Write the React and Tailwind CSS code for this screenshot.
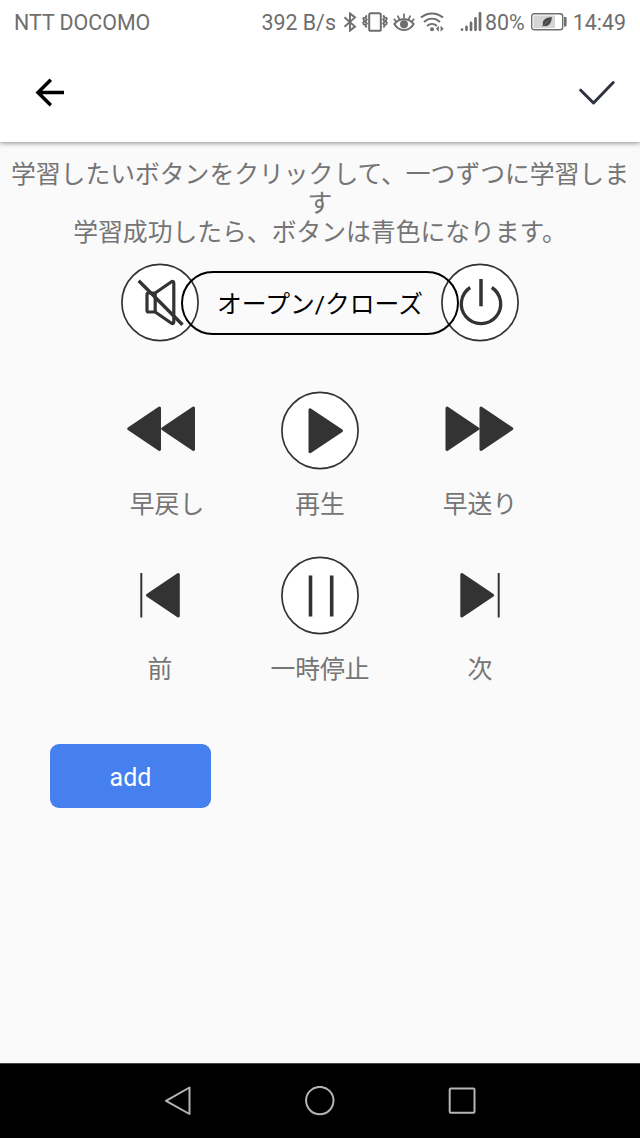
import { useState } from 'react'

const BluetoothIcon = () => (
  <svg width="14" height="20" viewBox="0 0 14 20" fill="none" stroke="currentColor" strokeWidth="1.9">
    <path d="M1.5 5.2 12 14.6 7 18.6V1.4L12 5.4 1.5 14.8" />
  </svg>
)

const VibrateIcon = () => (
  <svg width="26" height="20" viewBox="0 0 26 20" fill="none" stroke="currentColor">
    <rect x="7.2" y="1.2" width="11.6" height="17.6" rx="1.6" strokeWidth="2" />
    <path d="M4.8 3.4 3.4 5.400l1.400 2-1.400 2 1.400 2-1.400 2 1.200 2M2 5.200 1.200 6.800l1.200 2-1.200 2 1 2.400" strokeWidth="1.900" />
    <path d="M21.200 3.400 22.600 5.400l-1.400 2 1.400 2-1.400 2 1.400 2-1.200 2M24 5.200l.800 1.600-1.200 2 1.200 2-1 2.400" strokeWidth="1.900" />
  </svg>
)

const EyeIcon = () => (
  <svg width="22" height="20" viewBox="0 0 22 20" fill="none" stroke="currentColor" strokeWidth="2">
    <path d="M1.400 12C6 5.800 16 5.800 20.600 12 16 20 6 20 1.400 12Z" />
    <path d="M11 1.500v5M4.600 3.600l2 4M17.400 3.600l-2 4M.8 6.800l2.600 3M21.200 6.800l-2.600 3" strokeWidth="1.700" />
    <circle cx="11" cy="12.200" r="4" fill="currentColor" stroke="none" />
  </svg>
)

const WifiIcon = () => (
  <svg width="24" height="20" viewBox="0 0 24 20" fill="none" stroke="currentColor" strokeWidth="2">
    <path d="M1 5.600C7.500.100 16.500.100 23 5.600M4 9.900C9 5.600 15 5.600 20 9.900M7 13.900C10 11.300 14 11.300 17 13.900" />
    <circle cx="12" cy="17.200" r="2" fill="currentColor" stroke="none" />
    <path d="M18.900 13.800v6L15.900 16.800ZM20.600 13.800v6L23.600 16.800Z" fill="currentColor" stroke="none" />
  </svg>
)

const SignalIcon = () => (
  <svg width="22" height="20" viewBox="0 0 22 20" fill="none" stroke="currentColor" strokeWidth="2.700" strokeLinecap="round">
    <path d="M2 17.600v.1M6.500 14.900v2.900M11 10.900v6.900M15.500 6.400v11.400M20 1.200v16.600" />
  </svg>
)

const BatteryIcon = () => (
  <svg width="36" height="18" viewBox="0 0 36 18" fill="none">
    <rect x=".7" y=".8" width="31" height="16" rx="2.500" stroke="currentColor" strokeWidth="1.400" />
    <rect x="2.500" y="2.500" width="21.500" height="12.600" fill="#d4d4d4" />
    <path d="M33 4h1.500q1.100 0 1.100 1v7.500q0 1-1.100 1H33Z" fill="currentColor" />
    <path d="M20.900 4C15 4.400 10.900 6.700 12 12l-1.100 1.800 1.500-.7C18.500 14 20.300 9.800 20.900 4Z" fill="#4b4b4b" />
    <path d="m13.500 11.500 3.500-3.500" stroke="#999" strokeWidth=".5" />
  </svg>
)

const StatusBar = () => (
  <div className="h-11 px-[14px] flex items-center justify-between text-[21.400px] text-[#6e6e6e]">
    <span className="pt-[2px] whitespace-nowrap">NTT DOCOMO</span>
    <div className="flex items-center whitespace-nowrap">
      <span className="pt-[2px]">392 B/s</span>
      <div className="flex items-center ml-[7px] gap-[5px]">
        <BluetoothIcon />
        <VibrateIcon />
        <EyeIcon />
        <WifiIcon />
      </div>
      <div className="flex items-center ml-4 gap-[3px]">
        <SignalIcon />
        <span className="pt-[2px]">80%</span>
      </div>
      <div className="flex items-center ml-[6px] gap-[6px]">
        <BatteryIcon />
        <span className="pt-[2px]">14:49</span>
      </div>
    </div>
  </div>
)

const Header = () => (
  <header className="relative z-10 bg-white shadow-[0_1px_5px_rgba(0,0,0,0.45)]">
    <StatusBar />
    <div className="h-[98px] pl-[35px] pr-[25px] flex items-center justify-between">
      <button aria-label="戻る">
        <svg width="30" height="30" viewBox="0 0 30 30" fill="none" stroke="#000" strokeWidth="3.500">
          <path d="M29 14.500H3.500M15.800 1.700 3 14.500l12.800 12.800" />
        </svg>
      </button>
      <button aria-label="完了">
        <svg width="36" height="26" viewBox="0 0 36 26" fill="none" stroke="#30343f" strokeWidth="3" strokeLinecap="round" strokeLinejoin="round">
          <path d="M1.700 10.200 14.500 23 34.200 2.500" />
        </svg>
      </button>
    </div>
  </header>
)

const CircleIcon = ({ children }) => (
  <svg width="78" height="79" viewBox="0 0 78 79" fill="none" stroke="#333">
    <circle cx="39" cy="39.500" r="38.100" fill="#fff" strokeWidth="1.700" />
    {children}
  </svg>
)

const MuteIcon = () => (
  <CircleIcon>
    <g strokeWidth="3.200" strokeLinejoin="round">
      <path d="M34.200 30H27.500q-1.500 0-1.500 1.500v16q0 1.500 1.500 1.500h6.700ZM34.200 30 50.500 18.700q2.300-1 2.300 1.500v38.600q0 2.500-2.300 1.500L34.200 49" />
      <path d="M17.700 17.800 61.500 61.800" strokeWidth="3.400" />
    </g>
  </CircleIcon>
)

const PowerIcon = () => (
  <CircleIcon>
    <path d="M29.200 24.500A19.700 19.700 0 1 0 50.800 24.500" strokeWidth="3.300" />
    <path d="M40 16v27.300" strokeWidth="3.500" />
  </CircleIcon>
)

const PlayIcon = () => (
  <CircleIcon>
    <path d="M29 18.700 60.500 39.700 29 60.700Z" fill="#333" strokeWidth="3" strokeLinejoin="round" />
  </CircleIcon>
)

const PauseIcon = () => (
  <CircleIcon>
    <path d="M29.500 19.500v41M50.700 19.500v41" strokeWidth="3.600" />
  </CircleIcon>
)

const RewindIcon = () => (
  <svg width="78" height="79" viewBox="0 0 78 79" fill="#333" stroke="#333" strokeWidth="3" strokeLinejoin="round">
    <path d="M38.500 17 7.700 37.700 38.500 58.500ZM72.500 17 41.700 37.700 72.500 58.500Z" />
  </svg>
)

const ForwardIcon = () => (
  <svg width="78" height="79" viewBox="0 0 78 79" fill="#333" stroke="#333" strokeWidth="3" strokeLinejoin="round">
    <path d="M6 17 36.800 37.700 6 58.500ZM40 17 70.800 37.700 40 58.500Z" />
  </svg>
)

const PreviousIcon = () => (
  <svg width="78" height="79" viewBox="0 0 78 79" fill="#333" stroke="#333" strokeWidth="3" strokeLinejoin="round">
    <path d="M57.300 18.500 26.500 39.200 57.300 60Z" />
    <path d="M20.300 17v44.500" strokeWidth="2" />
  </svg>
)

const NextIcon = () => (
  <svg width="78" height="79" viewBox="0 0 78 79" fill="#333" stroke="#333" strokeWidth="3" strokeLinejoin="round">
    <path d="M20.800 18.500 51.600 39.200 20.800 60Z" />
    <path d="M57.700 17v44.500" strokeWidth="2" />
  </svg>
)

const keys = [
  { id: 'rewind', label: '早戻し', Icon: RewindIcon, labelClass: 'pl-[14px]' },
  { id: 'play', label: '再生', Icon: PlayIcon },
  { id: 'forward', label: '早送り', Icon: ForwardIcon },
  { id: 'previous', label: '前', Icon: PreviousIcon },
  { id: 'pause', label: '一時停止', Icon: PauseIcon },
  { id: 'next', label: '次', Icon: NextIcon }
]

const NavBar = () => (
  <nav className="h-[75px] bg-black border-t border-[#444] flex items-center justify-center gap-[112px]">
    <svg width="30" height="30" viewBox="0 0 30 30" fill="none" stroke="#b5b5b5" strokeWidth="2" strokeLinejoin="round">
      <path d="M26.500 1.500V28L3 14.800Z" />
    </svg>
    <svg width="30" height="30" viewBox="0 0 30 30" fill="none" stroke="#b5b5b5" strokeWidth="2">
      <circle cx="14.800" cy="14.600" r="13.700" />
    </svg>
    <svg width="30" height="30" viewBox="0 0 30 30" fill="none" stroke="#b5b5b5" strokeWidth="2">
      <rect x="2.700" y="2.400" width="24.800" height="24.400" rx="1" />
    </svg>
  </nav>
)

const App = () => {
  const [selected, setSelected] = useState(null)

  return (
    <div className="w-[640px] h-[1138px] flex flex-col overflow-hidden bg-[#fafafa] font-[Roboto,'Noto_Sans_CJK_JP',sans-serif]">
      <Header />

      <main className="flex-1 pt-[18px]">
        <p className="text-center text-[24.800px] leading-[29px] text-[#757575] whitespace-nowrap">
          学習したいボタンをクリックして、一つずつに学習しま
          <br />
          す
          <br />
          学習成功したら、ボタンは青色になります。
        </p>

        <div className="mt-4 flex items-center justify-center">
          <button aria-label="消音" onClick={() => setSelected('mute')}>
            <MuteIcon />
          </button>
          <button
            className="relative z-10 w-[278px] h-[64px] pt-1 -mx-[18px] rounded-full border-2 border-black text-[24.800px] text-black whitespace-nowrap"
            onClick={() => setSelected('toggle')}
          >
            オープン/クローズ
          </button>
          <button aria-label="電源" onClick={() => setSelected('power')}>
            <PowerIcon />
          </button>
        </div>

        <div className="mt-[49px] px-20 grid grid-cols-3 gap-y-[37px]">
          {keys.map(({ id, label, Icon, labelClass = '' }) => (
            <button
              key={id}
              className="flex flex-col items-center"
              aria-pressed={selected === id}
              onClick={() => setSelected(id)}
            >
              <Icon />
              <span className={`mt-5 text-[24.800px] leading-[29px] text-[#757575] ${labelClass}`}>{label}</span>
            </button>
          ))}
        </div>

        <button className="block mt-[60px] ml-[50px] w-[161px] h-16 pt-1 rounded-[9px] bg-[#467fee] text-white text-[25px]">
          add
        </button>
      </main>

      <NavBar />
    </div>
  )
}

export default App
